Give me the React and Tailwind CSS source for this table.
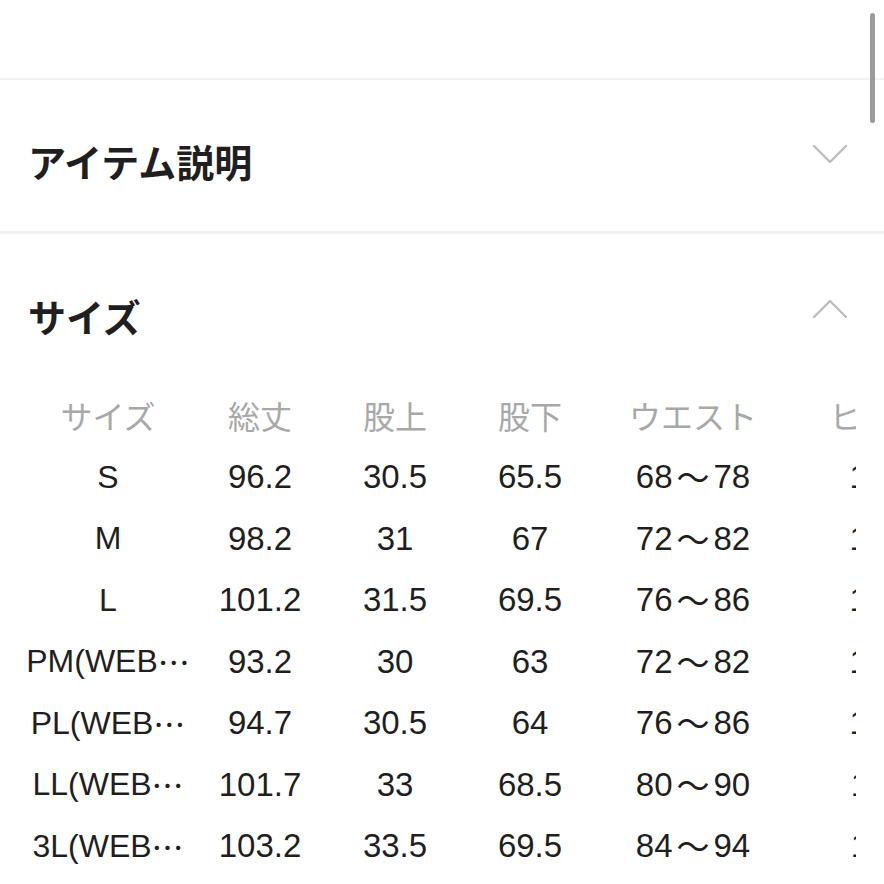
import React from 'react';

const rows = [
    { size: 'S', total: '96.2', rise: '30.5', inseam: '65.5', waist: '68〜78', hip: '100' },
    { size: 'M', total: '98.2', rise: '31', inseam: '67', waist: '72〜82', hip: '104' },
    { size: 'L', total: '101.2', rise: '31.5', inseam: '69.5', waist: '76〜86', hip: '108' },
    { size: 'PM(WEB', cut: true, total: '93.2', rise: '30', inseam: '63', waist: '72〜82', hip: '104' },
    { size: 'PL(WEB', cut: true, total: '94.7', rise: '30.5', inseam: '64', waist: '76〜86', hip: '108' },
    { size: 'LL(WEB', cut: true, total: '101.7', rise: '33', inseam: '68.5', waist: '80〜90', hip: '112' },
    { size: '3L(WEB', cut: true, total: '103.2', rise: '33.5', inseam: '69.5', waist: '84〜94', hip: '116' },
];

const headers = ['サイズ', '総丈', '股上', '股下', 'ウエスト', 'ヒップ'];

const gridCols = 'grid grid-cols-[160px_144px_126px_144px_182px_186px] w-max';

function Chevron({ up }) {
    return (
        <svg width="34" height="19" viewBox="0 0 34 19" fill="none" className="shrink-0">
            <polyline
                points={up ? '1,18 17,2 33,18' : '1,1 17,17 33,1'}
                stroke="#bdbdbd"
                strokeWidth="2.4"
                strokeLinecap="round"
                strokeLinejoin="round"
            />
        </svg>
    );
}

function Range({ value }) {
    const [from, to] = value.split('〜');
    return (
        <>
            {from}
            <span className="mx-[4px] font-['Noto_Sans_CJK_JP',sans-serif]">〜</span>
            {to}
        </>
    );
}

export default function App() {
    return (
        <div className="relative w-[884px] h-[884px] overflow-hidden bg-white text-[#1f1f1f] font-['Liberation_Sans','Noto_Sans_CJK_JP',sans-serif]">

            {/* scrollbar */}
            <div className="absolute right-[9px] top-[13px] w-[5px] h-[110px] rounded-full bg-[#9b9b9b]" />

            <div className="h-[78px]" />
            <div className="h-[2px] bg-[#f2f2f2]" />

            {/* アイテム説明 */}
            <div className="h-[151px] flex items-center justify-between pl-7 pr-[37px] pt-[10px]">
                <h2 className="text-[38px] font-bold font-['Noto_Sans_CJK_JP',sans-serif] leading-none">アイテム説明</h2>
                <div className="-mt-[12px]"><Chevron /></div>
            </div>
            <div className="h-[3px] bg-[#f2f2f2]" />

            {/* サイズ */}
            <div className="flex justify-between pl-7 pr-[37px] pt-[60px] h-[150px] items-start">
                <h2 className="text-[38px] font-bold font-['Noto_Sans_CJK_JP',sans-serif] leading-[44px]">サイズ</h2>
                <div className="mt-[5px]"><Chevron up /></div>
            </div>

            <div className="mx-7 overflow-hidden">
                <div className={gridCols}>
                    {headers.map((h) => (
                        <div key={h} className="h-[62px] flex items-center justify-center text-[32px] text-[#a8a8a8] font-['Noto_Sans_CJK_JP',sans-serif]">
                            {h}
                        </div>
                    ))}
                </div>
                {rows.map((r) => (
                    <div key={r.size} className={gridCols}>
                        <div className="h-[61.5px] flex items-center justify-center text-[32px] whitespace-nowrap">
                            {r.size}
                            {r.cut && <span className="font-['Noto_Sans_CJK_JP',sans-serif]">…</span>}
                        </div>
                        {[r.total, r.rise, r.inseam].map((v, i) => (
                            <div key={i} className="h-[61.5px] flex items-center justify-center text-[33px] whitespace-nowrap">
                                {v}
                            </div>
                        ))}
                        <div className="h-[61.5px] flex items-center justify-center text-[33px] whitespace-nowrap">
                            <Range value={r.waist} />
                        </div>
                        <div className="h-[61.5px] flex items-center justify-center text-[33px] whitespace-nowrap">
                            {r.hip}
                        </div>
                    </div>
                ))}
            </div>
        </div>
    );
}
